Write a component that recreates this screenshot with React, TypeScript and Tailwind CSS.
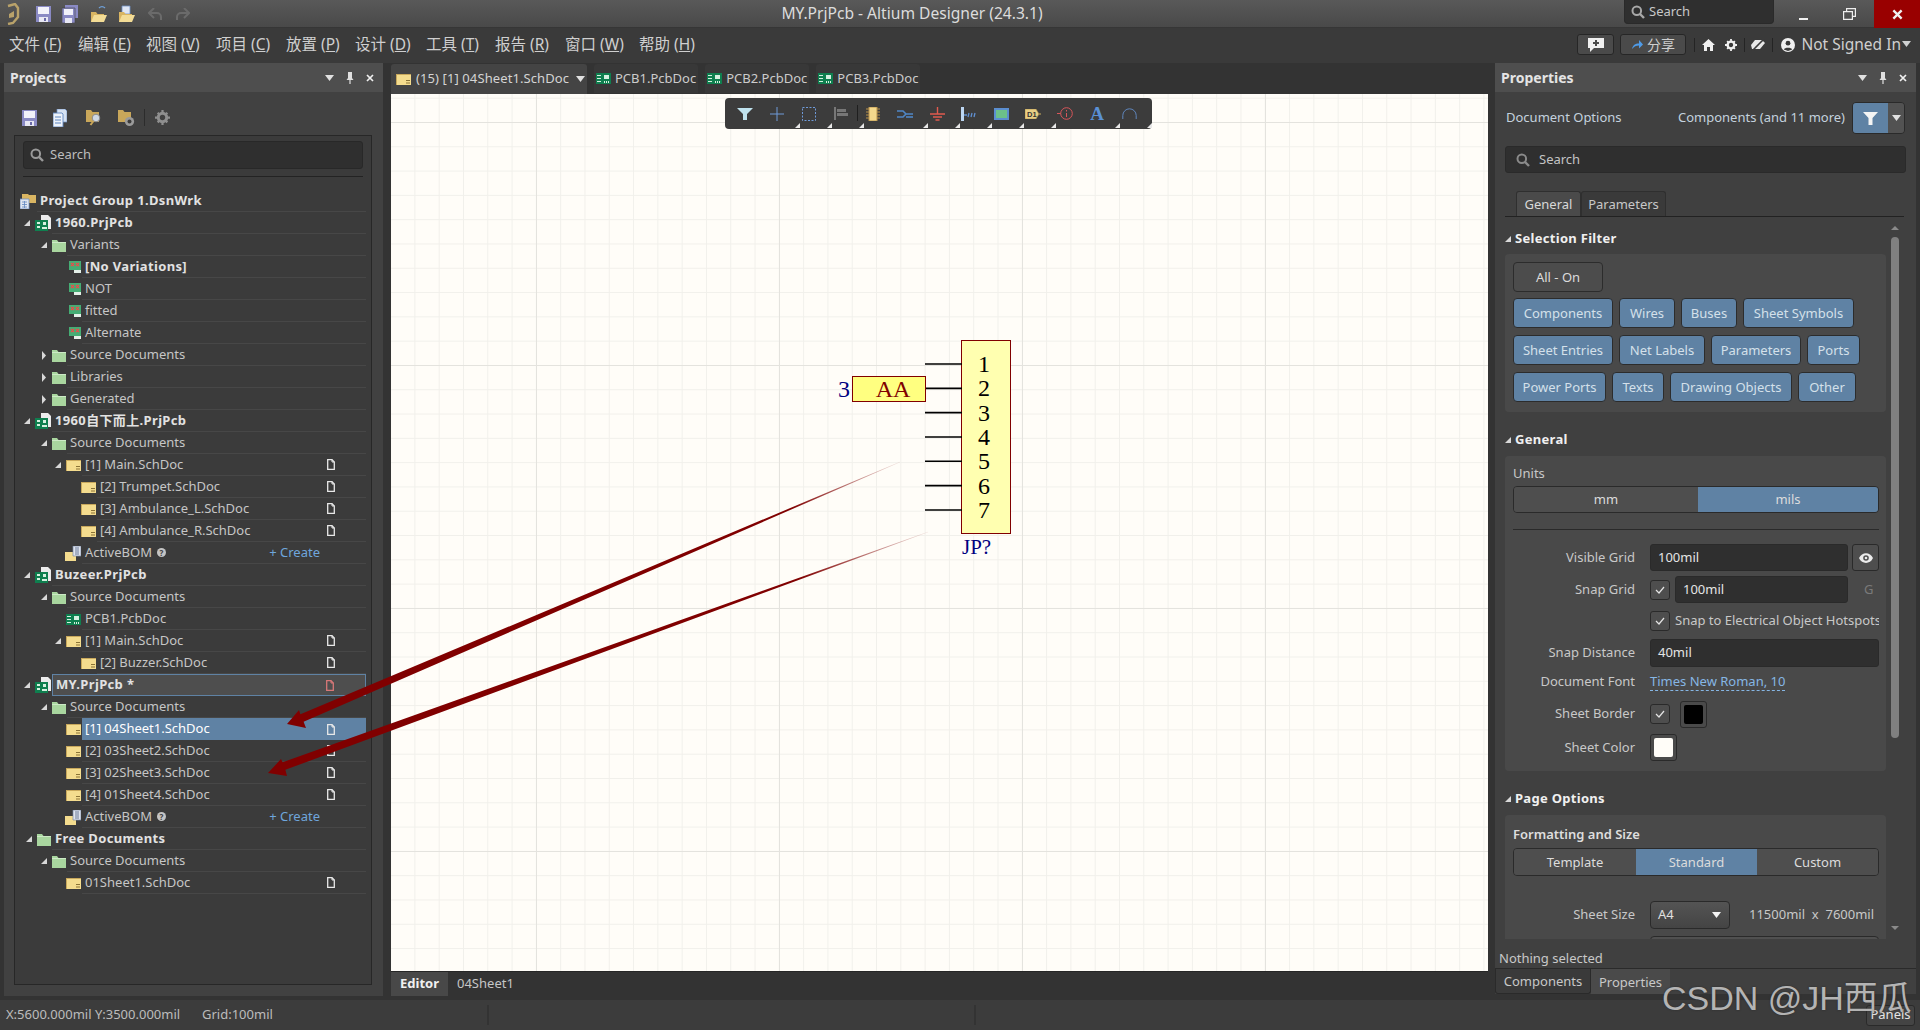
import type { ReactNode } from 'react';

const uiFont = "font-['Noto_Sans','Noto_Sans_CJK_SC',sans-serif]";

// ---- small icons ----
const Corner = () => (
  <svg width="6" height="6" viewBox="0 0 6 6"><path d="M6 0V6H0Z" fill="#d8d8d8" /></svg>
);
const Right = () => (
  <svg width="6" height="9" viewBox="0 0 6 9"><path d="M1 0L5 4.5L1 9Z" fill="#d8d8d8" /></svg>
);
const Caret = ({ c = '#e0e0e0' }: { c?: string }) => (
  <svg width="9" height="6" viewBox="0 0 9 6"><path d="M0 0H9L4.5 6Z" fill={c} /></svg>
);
const Pin = () => (
  <svg width="8" height="12" viewBox="0 0 8 12"><path d="M2 0H6V6L7.5 8H4.6V12H3.4V8H.5L2 6Z" fill="#e0e0e0" /></svg>
);
const Close = ({ s = 8 }: { s?: number }) => (
  <svg width={s} height={s} viewBox="0 0 8 8"><path d="M1 1L7 7M7 1L1 7" stroke="#f0f0f0" strokeWidth="1.7" /></svg>
);
const Glass = ({ c = '#9a9a9a' }: { c?: string }) => (
  <svg width="14" height="14" viewBox="0 0 14 14" fill="none">
    <circle cx="5.8" cy="5.8" r="4.3" stroke={c} strokeWidth="2" />
    <path d="M9 9L13 13" stroke={c} strokeWidth="2.4" />
  </svg>
);
const Floppy = () => (
  <svg width="15" height="16" viewBox="0 0 15 16">
    <path d="M0 0H15V16H0Z" fill="#8a8ac4" />
    <path d="M2 1H13V8H2Z" fill="#f2f2fa" />
    <path d="M3 11H12V16H3Z" fill="#e8e8f4" />
    <path d="M8 12H10V15H8Z" fill="#6a6aa8" />
  </svg>
);
const SaveAll = () => (
  <svg width="16" height="18" viewBox="0 0 16 18">
    <path d="M3 0H16V13H3Z" fill="#8a8ac4" />
    <path d="M0 3H13V18H0Z" fill="#8a8ac4" stroke="#3f3f3f" strokeWidth=".6" />
    <path d="M2 4H11V10H2Z" fill="#f2f2fa" />
    <path d="M3 13H10V18H3Z" fill="#e8e8f4" />
  </svg>
);
const OpenFolder = ({ page = false }: { page?: boolean }) => (
  <svg width="17" height="18" viewBox="0 0 17 18">
    {page && <path d="M4 1H12V9H4Z" fill="#dfe6f4" stroke="#6f8fc4" strokeWidth=".8" />}
    {!page && <path d="M9 3A4 4 0 0 1 15 3" fill="none" stroke="#6fa0d8" strokeWidth="1.2" />}
    <path d="M1 7H6L7.5 9H14V17H1Z" fill="#d9b562" />
    <path d="M1 17L4 10H17L14 17Z" fill="#f3dc96" />
  </svg>
);
const Curve = ({ flip = false }: { flip?: boolean }) => (
  <svg width="15" height="12" viewBox="0 0 15 12" fill="none" className={flip ? '-scale-x-100' : ''}>
    <path d="M2 5H9A4 4 0 0 1 13 9V12" stroke="#6b6b6b" strokeWidth="2" />
    <path d="M6 0L1 5L6 10" stroke="#6b6b6b" strokeWidth="2" />
  </svg>
);
const Logo = () => (
  <svg width="14" height="22" viewBox="0 0 14 22" fill="none">
    <path d="M2 3L9 1L12 5V14L7 20L2 21" stroke="#b9a26a" strokeWidth="2.4" />
    <path d="M3 11L8 8V14L3 15Z" fill="#b9a26a" />
  </svg>
);
const Docs = () => (
  <svg width="14" height="18" viewBox="0 0 14 18">
    <path d="M4 0H12L14 2V13H4Z" fill="#d6e2f2" stroke="#6f8fc4" strokeWidth=".7" />
    <path d="M0 4H9L10 5V18H0Z" fill="#eef3fa" stroke="#5f86c0" strokeWidth=".9" />
    <path d="M2 8H8M2 11H8M2 14H8" stroke="#5f86c0" />
  </svg>
);
const FolderSearch = ({ gear = false }: { gear?: boolean }) => (
  <svg width="17" height="18" viewBox="0 0 17 18">
    <path d="M0 1H5L6.5 3H13V13H0Z" fill="#c9a75a" />
    {gear ? (
      <g>
        <circle cx="11.5" cy="12.5" r="4.6" fill="#9a9a9a" />
        <circle cx="11.5" cy="12.5" r="2" fill="#3c3c3c" />
      </g>
    ) : (
      <g>
        <circle cx="10" cy="9" r="3.8" fill="#cfd8e4" stroke="#8a8a8a" />
        <path d="M7.5 12L4.5 16" stroke="#c9a75a" strokeWidth="2" />
      </g>
    )}
  </svg>
);
const Gear = ({ c = '#8f8f8f', s = 15 }: { c?: string; s?: number }) => (
  <svg width={s} height={s} viewBox="0 0 16 16">
    <path d="M8 3.5A4.5 4.5 0 1 0 8 12.5A4.5 4.5 0 1 0 8 3.5Z" fill="none" stroke={c} strokeWidth="3.2" />
    <path d="M6.8 0H9.2V3H6.8ZM6.8 13H9.2V16H6.8ZM0 6.8H3V9.2H0ZM13 6.8H16V9.2H13ZM2 3.7L3.7 2L5.6 3.9L3.9 5.6ZM10.4 12.1L12.1 10.4L14 12.3L12.3 14ZM12.3 2L14 3.7L12.1 5.6L10.4 3.9ZM3.9 10.4L5.6 12.1L3.7 14L2 12.3Z" fill={c} />
  </svg>
);
const PrjIcon = () => (
  <svg width="16" height="16" viewBox="0 0 16 16">
    <path d="M6 0H13L16 3V14H6Z" fill="#ececec" />
    <path d="M0 5H13V16H0Z" fill="#0f7f4f" />
    <path d="M2 7H5V9H2ZM2 11H5V13H2ZM8 7H11V10H8ZM7 12H12V14H7Z" fill="#d6f0e0" />
  </svg>
);
const GreenFolder = () => (
  <svg width="14" height="13" viewBox="0 0 14 13">
    <path d="M0 1H5L6.5 3H14V13H0Z" fill="#a9d69f" />
    <path d="M0 3H14V4H0Z" fill="#cdeac6" />
  </svg>
);
const SchIcon = () => (
  <svg width="15" height="11" viewBox="0 0 15 11">
    <path d="M0 0H15V11H0Z" fill="#f4dc8e" />
    <path d="M0 0H15V1H0ZM0 0H1V11H0Z" fill="#c8a85c" />
    <path d="M10 6H14V7H10ZM10 8.5H14V9.5H10Z" fill="#8a7336" />
  </svg>
);
const PcbIcon = () => (
  <svg width="15" height="11" viewBox="0 0 15 11">
    <path d="M0 0H15V11H0Z" fill="#0f7f4f" />
    <path d="M1 2H5V3H1ZM1 5H5V6H1ZM1 8H5V9H1ZM8 2H13V6H8ZM8 8H9V10H8ZM10 8H11V10H10ZM12 8H13V10H12Z" fill="#d6f0e0" />
  </svg>
);
const VarIcon = () => (
  <svg width="12" height="12" viewBox="0 0 12 12">
    <path d="M0 0H12V9H0Z" fill="#45ad74" />
    <path d="M5 9H12V12H5Z" fill="#e4f0e8" />
    <path d="M2 2L5 5M5 2L2 5M7 2L10 5M10 2L7 5" stroke="#ef4a4a" strokeWidth="1.2" />
  </svg>
);
const BomIcon = () => (
  <svg width="16" height="15" viewBox="0 0 16 15">
    <path d="M0 6H11V15H0Z" fill="#f4dc8e" />
    <path d="M8 0H16V10H8Z" fill="#dfe4ee" stroke="#7a8aa8" strokeWidth=".7" />
    <path d="M10 2H14M10 4H14M10 6H14M10 8H14" stroke="#6a7a98" />
  </svg>
);
const GroupIcon = () => (
  <svg width="16" height="16" viewBox="0 0 16 16">
    <path d="M2 1H8L9 2H16V10H2Z" fill="#d9b562" />
    <path d="M0 6H9V16H0Z" fill="#dfe6f0" stroke="#6f8fc4" strokeWidth=".8" />
    <path d="M2 9H7M2 11.5H7M2 14H7M4.5 8V15" stroke="#5f86c0" strokeWidth=".8" />
  </svg>
);
const DocMark = ({ c = '#e8e8e8' }: { c?: string }) => (
  <svg width="8" height="11" viewBox="0 0 8 11" fill="none">
    <path d="M.7.7H5L7.3 3V10.3H.7Z" stroke={c} strokeWidth="1.3" />
    <path d="M5 .7V3H7.3" stroke={c} />
  </svg>
);
const Help = () => (
  <span className="flex h-[9px] w-[9px] items-center justify-center rounded-full bg-[#c4c4c4] text-[8px] font-bold leading-none text-[#3c3c3c]">?</span>
);

// ---- project tree ----
type Kind = 'group' | 'prj' | 'folder' | 'sch' | 'pcb' | 'var' | 'bom';
type Row = {
  level: number;
  name: string;
  kind: Kind;
  bold?: boolean;
  open?: boolean;
  closed?: boolean;
  doc?: boolean;
  create?: boolean;
  hover?: boolean;
  selected?: boolean;
};

const rows: Row[] = [
  { level: 0, name: 'Project Group 1.DsnWrk', kind: 'group', bold: true },
  { level: 1, name: '1960.PrjPcb', kind: 'prj', bold: true, open: true },
  { level: 2, name: 'Variants', kind: 'folder', open: true },
  { level: 3, name: '[No Variations]', kind: 'var', bold: true },
  { level: 3, name: 'NOT', kind: 'var' },
  { level: 3, name: 'fitted', kind: 'var' },
  { level: 3, name: 'Alternate', kind: 'var' },
  { level: 2, name: 'Source Documents', kind: 'folder', closed: true },
  { level: 2, name: 'Libraries', kind: 'folder', closed: true },
  { level: 2, name: 'Generated', kind: 'folder', closed: true },
  { level: 1, name: '1960自下而上.PrjPcb', kind: 'prj', bold: true, open: true },
  { level: 2, name: 'Source Documents', kind: 'folder', open: true },
  { level: 3, name: '[1] Main.SchDoc', kind: 'sch', open: true, doc: true },
  { level: 4, name: '[2] Trumpet.SchDoc', kind: 'sch', doc: true },
  { level: 4, name: '[3] Ambulance_L.SchDoc', kind: 'sch', doc: true },
  { level: 4, name: '[4] Ambulance_R.SchDoc', kind: 'sch', doc: true },
  { level: 3, name: 'ActiveBOM', kind: 'bom', create: true },
  { level: 1, name: 'Buzeer.PrjPcb', kind: 'prj', bold: true, open: true },
  { level: 2, name: 'Source Documents', kind: 'folder', open: true },
  { level: 3, name: 'PCB1.PcbDoc', kind: 'pcb' },
  { level: 3, name: '[1] Main.SchDoc', kind: 'sch', open: true, doc: true },
  { level: 4, name: '[2] Buzzer.SchDoc', kind: 'sch', doc: true },
  { level: 1, name: 'MY.PrjPcb *', kind: 'prj', bold: true, open: true, hover: true, doc: true },
  { level: 2, name: 'Source Documents', kind: 'folder', open: true },
  { level: 3, name: '[1] 04Sheet1.SchDoc', kind: 'sch', doc: true, selected: true },
  { level: 3, name: '[2] 03Sheet2.SchDoc', kind: 'sch', doc: true },
  { level: 3, name: '[3] 02Sheet3.SchDoc', kind: 'sch', doc: true },
  { level: 3, name: '[4] 01Sheet4.SchDoc', kind: 'sch', doc: true },
  { level: 3, name: 'ActiveBOM', kind: 'bom', create: true },
  { level: 1, name: 'Free Documents', kind: 'folder', bold: true, open: true },
  { level: 2, name: 'Source Documents', kind: 'folder', open: true },
  { level: 3, name: '01Sheet1.SchDoc', kind: 'sch', doc: true },
];

const indent = ['w-[22px]', 'w-[37px]', 'w-[52px]', 'w-[67px]', 'w-[82px]'];

const kindIcon: Record<Kind, ReactNode> = {
  group: <GroupIcon />,
  prj: <PrjIcon />,
  folder: <GreenFolder />,
  sch: <SchIcon />,
  pcb: <PcbIcon />,
  var: <VarIcon />,
  bom: <BomIcon />,
};

function TreeRow({ row }: { row: Row }) {
  let body = 'border-b border-[#474747]';
  if (row.hover) body = 'border border-[#5f82a4] bg-[#4e4e4e] text-white';
  if (row.selected) body = 'bg-[#5f82a4] text-white';
  return (
    <div className="flex h-[22px]">
      <div className={`flex shrink-0 items-center justify-end pr-[1px] ${indent[row.level]}`}>
        {row.open && <span className="mr-[5px] flex items-center"><Corner /></span>}
        {row.closed && <span className="mr-[5px] flex items-center"><Right /></span>}
        <span className="flex items-center">{kindIcon[row.kind]}</span>
      </div>
      <div className={`mr-[5px] flex min-w-0 flex-1 items-center pl-[3px] ${body}`}>
        <span className={row.bold ? 'font-bold tracking-[0.35px] text-[#e2e2e2]' : ''}>{row.name}</span>
        {row.create && <span className="ml-[5px]"><Help /></span>}
        {row.create && <span className="ml-auto mr-[46px] text-[#6fa6dc]">+ Create</span>}
        {row.doc && (
          <span className="ml-auto mr-[31px] flex items-center">
            <DocMark c={row.hover ? '#d87878' : '#e8e8e8'} />
          </span>
        )}
      </div>
    </div>
  );
}

function PanelHeader({ title }: { title: string }) {
  return (
    <div className="flex h-[29px] shrink-0 items-center bg-[#4e4e4e] pl-[6px] pr-[9px]">
      <span className="text-[14px] font-bold text-[#e4e4e4]">{title}</span>
      <div className="ml-auto flex items-center gap-[12px]">
        <Caret />
        <Pin />
        <Close />
      </div>
    </div>
  );
}

function ProjectsPanel() {
  return (
    <div className="flex w-[379px] shrink-0 flex-col bg-[#414141]">
      <PanelHeader title="Projects" />
      <div className="flex h-[43px] shrink-0 items-center pl-[18px] pt-[8px]">
        <span className="w-[31px]"><Floppy /></span>
        <span className="w-[33px]"><Docs /></span>
        <span className="w-[32px]"><FolderSearch /></span>
        <span className="w-[26px]"><FolderSearch gear /></span>
        <span className="h-[17px] w-px bg-[#2c2c2c]" />
        <span className="ml-[10px]"><Gear /></span>
      </div>
      <div className="mb-[11px] ml-[10px] mr-[11px] flex-1 border border-[#272727] bg-[#3b3b3b] text-[13px] text-[#c6c6c6]">
        <div className="mx-[8px] mt-[5px] flex h-[28px] items-center gap-[6px] rounded-[3px] border border-[#282828] bg-[#2f2f2f] pl-[6px] text-[#bdbdbd]">
          <Glass />
          <span>Search</span>
        </div>
        <div className="mx-[8px] mb-[13px] mt-[7px] border-b border-[#232323]" />
        {rows.map((r, i) => (
          <TreeRow key={i} row={r} />
        ))}
      </div>
    </div>
  );
}

// ---- top bars ----
function TitleBar() {
  return (
    <div className="relative flex h-[28px] shrink-0 items-center border-b border-[#363636] bg-[linear-gradient(to_bottom,#595959,#494949)]">
      <span className="ml-[6px] w-[30px]"><Logo /></span>
      <span className="w-[26px]"><Floppy /></span>
      <span className="w-[28px]"><SaveAll /></span>
      <span className="w-[28px]"><OpenFolder /></span>
      <span className="w-[30px]"><OpenFolder page /></span>
      <span className="w-[27px]"><Curve /></span>
      <span><Curve flip /></span>
      <span className="absolute left-0 right-[96px] text-center text-[15.6px] text-[#dcdcdc]">MY.PrjPcb - Altium Designer (24.3.1)</span>
      <div className="relative ml-auto flex h-full items-start">
        <div className="flex h-[24px] w-[150px] items-center gap-[4px] rounded-b-[4px] border border-t-0 border-[#2a2a2a] bg-[#2f2f2f] pl-[6px] text-[13px] text-[#c8c8c8]">
          <Glass c="#a8a8a8" />
          <span>Search</span>
        </div>
        <div className="flex h-[27px] w-[50px] items-end justify-center pb-[7px]"><span className="ml-[8px] h-[2px] w-[9px] bg-[#f0f0f0]" /></div>
        <div className="flex h-[27px] w-[50px] items-center justify-center">
          <svg width="13" height="12" viewBox="0 0 13 12" fill="none" stroke="#eeeeee" strokeWidth="1.2">
            <path d="M.6 3.6H9.4V11.4H.6Z" />
            <path d="M3.6 3.6V.6H12.4V8.4H9.4" />
          </svg>
        </div>
        <div className="flex h-[28px] w-[46px] items-center justify-center bg-[#990000]"><Close s={11} /></div>
      </div>
    </div>
  );
}

const menus: [string, string, string][] = [
  ['文件', 'F', 'w-[69px]'], ['编辑', 'E', 'w-[68px]'], ['视图', 'V', 'w-[70px]'], ['项目', 'C', 'w-[70px]'], ['放置', 'P', 'w-[69px]'],
  ['设计', 'D', 'w-[71px]'], ['工具', 'T', 'w-[69px]'], ['报告', 'R', 'w-[70px]'], ['窗口', 'W', 'w-[74px]'], ['帮助', 'H', 'w-[70px]'],
];

function MenuBar() {
  return (
    <div className="flex h-[35px] shrink-0 items-center bg-[#3a3a3a] pb-[2px] pl-[9px] pr-[9px] text-[15.5px] text-[#cfcfcf]">
      {menus.map(([label, key, w]) => (
        <span key={key} className={`whitespace-nowrap ${w}`}>
          {label} (<span className="underline">{key}</span>)
        </span>
      ))}
      <div className="ml-auto flex items-center">
        <div className="flex h-[21px] w-[37px] items-center justify-center rounded-[3px] border border-[#262626] bg-[#4a4a4a]">
          <svg width="16" height="14" viewBox="0 0 16 14">
            <path d="M0 0H16V10H6L2 14V10H0Z" fill="#f0f0f0" />
            <path d="M7 2H9V4H11V6H9V8H7V6H5V4H7Z" fill="#4a4a4a" />
          </svg>
        </div>
        <div className="ml-[6px] flex h-[21px] w-[66px] items-center justify-center gap-[4px] rounded-[3px] border border-[#262626] bg-[#4a4a4a] text-[14px]">
          <svg width="11" height="9" viewBox="0 0 11 9"><path d="M0 9C1 5 3 3.5 7 3.5V0L11 4.5L7 8.5V5.5C4 5.5 2 6.5 0 9Z" fill="#4f9be8" /></svg>
          <span>分享</span>
        </div>
        <span className="ml-[8px] h-[14px] w-px bg-[#242424]" />
        <svg className="ml-[7px]" width="13" height="12" viewBox="0 0 13 12"><path d="M6.5 0L13 6H11V12H8V8H5V12H2V6H0Z" fill="#f0f0f0" /></svg>
        <span className="ml-[10px]"><Gear c="#f0f0f0" s={12} /></span>
        <span className="ml-[7px] h-[14px] w-px bg-[#242424]" />
        <svg className="ml-[6px]" width="14" height="12" viewBox="0 0 14 12">
          <path d="M4 1H11L14 4L9 10H1L0 6Z" fill="#e8e8e8" />
          <path d="M1 12L13 0" stroke="#3a3a3a" strokeWidth="1.6" />
        </svg>
        <span className="ml-[7px] h-[14px] w-px bg-[#242424]" />
        <svg className="ml-[8px]" width="14" height="14" viewBox="0 0 14 14">
          <circle cx="7" cy="7" r="7" fill="#f0f0f0" />
          <circle cx="7" cy="5.2" r="2.4" fill="#3a3a3a" />
          <path d="M2.8 11.5C3.5 9 10.5 9 11.2 11.5L7 13Z" fill="#3a3a3a" />
        </svg>
        <span className="ml-[6px] whitespace-nowrap">Not Signed In</span>
        <span className="ml-[1px] mb-[2px] flex"><Caret c="#d0d0d0" /></span>
      </div>
    </div>
  );
}

// ---- editor ----
const DocTab = ({ name, icon }: { name: string; icon: ReactNode }) => (
  <div className="flex h-[29px] items-center gap-[4px] rounded-t-[3px] bg-[#383838] px-[2px] text-[13px] text-[#cccccc]">
    <span className="flex items-center">{icon}</span>
    <span>{name}</span>
  </div>
);

const Fold = () => (
  <span className="absolute bottom-[1px] right-[-7px] h-0 w-0 border-b-[5px] border-l-[5px] border-b-[#e8e8e8] border-l-transparent" />
);

const tools: ReactNode[] = [
  <svg width="16" height="12" viewBox="0 0 16 12"><path d="M0 0H16L10 6V12H6V6Z" fill="#bfe2ee" /></svg>,
  <svg width="14" height="14" viewBox="0 0 14 14"><path d="M7 0V14M0 7H14" stroke="#6f9ad8" /></svg>,
  <svg width="14" height="14" viewBox="0 0 14 14"><path d="M.5.5H13.5V13.5H.5Z" fill="none" stroke="#6f9ad8" strokeDasharray="2 1.5" /></svg>,
  <svg width="14" height="13" viewBox="0 0 14 13"><path d="M0 0H2V13H0ZM3 2H12V5H3ZM3 6H14V9H3Z" fill="#777777" /></svg>,
  <svg width="14" height="14" viewBox="0 0 14 14"><path d="M3 0H11V14H3Z" fill="#f4d98c" stroke="#b9924a" /><path d="M0 2H3M0 5H3M0 8H3M0 11H3M11 2H14M11 5H14M11 8H14M11 11H14" stroke="#b9924a" /></svg>,
  <svg width="16" height="10" viewBox="0 0 16 10" fill="none" stroke="#4f86c6" strokeWidth="1.6"><path d="M0 2H6L9 5H16" /><path d="M0 8H6L9 5" /><path d="M9 8H16" /></svg>,
  <svg width="15" height="14" viewBox="0 0 15 14"><path d="M7.5 0V7M0 7H15M3 10H12M5.5 13H9.5" stroke="#e05a4e" strokeWidth="1.4" /></svg>,
  <svg width="16" height="14" viewBox="0 0 16 14"><path d="M0 0H3V14H0Z" fill="#bcd6f2" /><path d="M3 8H6M7 10L8 6M10 10L11 6M13 10L14 6" stroke="#5f8fd0" strokeWidth="1.3" /></svg>,
  <svg width="15" height="12" viewBox="0 0 15 12"><path d="M0 0H15V12H0Z" fill="#5b8ed0" /><path d="M2 2H13V10H2Z" fill="#6cc08a" /></svg>,
  <svg width="16" height="10" viewBox="0 0 16 10"><path d="M0 0H11L14 5L11 10H0Z" fill="#e8cf84" stroke="#a88c44" strokeWidth=".6" /><path d="M14 5H16" stroke="#c8ac5c" /><text x="2" y="8" fontSize="7.5" fontWeight="bold" fill="#333333" fontFamily="Liberation Sans, sans-serif">D1</text></svg>,
  <svg width="16" height="13" viewBox="0 0 16 13" fill="none" stroke="#d8565a"><circle cx="9.5" cy="6.5" r="5.8" /><path d="M0 6.5H3.7M9.5 3V4.5M9.5 6V10" /></svg>,
  <span className="font-['Liberation_Serif',serif] text-[19px] font-bold leading-none text-[#5a90d4]">A</span>,
  <svg width="15" height="11" viewBox="0 0 15 11" fill="none"><path d="M.8 11V7.5A6.7 6.7 0 0 1 14.2 7.5V11" stroke="#5f86bc" /></svg>,
];

function Schematic() {
  const serif = 'Liberation Serif, serif';
  const pins = [1, 2, 3, 4, 5, 6, 7];
  return (
    <svg className="absolute left-0 top-0" width="1097" height="877" viewBox="391 94 1097 877">
      <rect x="961.5" y="340.5" width="49" height="193" fill="#ffffb0" stroke="#800000" />
      {pins.map((n, i) => {
        const y = 364 + i * 24.33;
        return (
          <g key={n}>
            <path d={`M925 ${y}H962`} stroke="#000000" strokeWidth="1.6" />
            <text x="984" y={y + 8} fontSize="24" fontFamily={serif} textAnchor="middle" fill="#000000">{n}</text>
          </g>
        );
      })}
      <rect x="852.5" y="376.5" width="73" height="25" fill="#ffff80" stroke="#800000" />
      <text x="893" y="397" fontSize="24" fontFamily={serif} textAnchor="middle" fill="#800000">AA</text>
      <text x="838" y="397" fontSize="24" fontFamily={serif} fill="#000080">3</text>
      <text x="962" y="554" fontSize="21" fontFamily={serif} fill="#000080">JP?</text>
    </svg>
  );
}

function Editor() {
  return (
    <div className="flex w-[1097px] shrink-0 flex-col">
      <div className="flex h-[31px] shrink-0 gap-[7px] pt-[1px]">
        <div className="flex h-[30px] w-[196px] items-center gap-[5px] rounded-t-[3px] bg-[#444444] pl-[5px] text-[13px] text-[#d4d4d4]">
          <SchIcon />
          <span className="whitespace-nowrap tracking-[0.1px]">(15) [1] 04Sheet1.SchDoc</span>
          <span className="ml-auto mr-[2px] flex"><Caret /></span>
        </div>
        <DocTab name="PCB1.PcbDoc" icon={<PcbIcon />} />
        <DocTab name="PCB2.PcbDoc" icon={<PcbIcon />} />
        <DocTab name="PCB3.PcbDoc" icon={<PcbIcon />} />
      </div>
      <div className="relative flex-1 bg-[#fffdf8] bg-[linear-gradient(to_right,#e4e3de_1px,transparent_1px),linear-gradient(to_bottom,#e4e3de_1px,transparent_1px),linear-gradient(to_right,#f1f0eb_1px,transparent_1px),linear-gradient(to_bottom,#f1f0eb_1px,transparent_1px)] [background-size:243px_243px,243px_243px,24.3px_24.3px,24.3px_24.3px] [background-position:145px_28px,145px_28px,23.4px_3.7px,23.4px_3.7px]">
        <Schematic />
        <div className="absolute left-[334px] top-[4px] flex h-[31px] w-[427px] items-center rounded-[4px] bg-[#3c3c3c] pl-[4px]">
          {tools.map((t, i) => (
            <div key={i} className="relative flex h-full w-[32px] shrink-0 items-center justify-center">
              {t}
              {i !== 0 && i !== 4 && i !== 10 && <Fold />}
              {i === 3 && <span className="absolute right-[-1px] top-[7px] h-[16px] w-px bg-[#1f1f1f]" />}
            </div>
          ))}
        </div>
      </div>
      <div className="flex h-[25px] shrink-0 items-stretch border-t border-[#262626] text-[13px]">
        <div className="flex w-[57px] items-center justify-center bg-[#484848] font-bold text-[#f0f0f0]">Editor</div>
        <div className="flex items-center pl-[9px] text-[#c6c6c6]">04Sheet1</div>
      </div>
    </div>
  );
}

// ---- properties ----
const filterRows: [string, string][][] = [
  [['Components', 'w-[100px]'], ['Wires', 'w-[56px]'], ['Buses', 'w-[56px]'], ['Sheet Symbols', 'w-[111px]']],
  [['Sheet Entries', 'w-[100px]'], ['Net Labels', 'w-[86px]'], ['Parameters', 'w-[90px]'], ['Ports', 'w-[53px]']],
  [['Power Ports', 'w-[93px]'], ['Texts', 'w-[52px]'], ['Drawing Objects', 'w-[122px]'], ['Other', 'w-[58px]']],
];

const SectionHead = ({ title, pad }: { title: string; pad: string }) => (
  <div className={`flex items-center gap-[4px] text-[13px] font-bold tracking-[0.3px] text-[#f0f0f0] ${pad}`}>
    <Corner />
    <span>{title}</span>
  </div>
);

const Field = ({ label, children, h, mt }: { label: string; children: ReactNode; h: string; mt: string }) => (
  <div className={`flex items-center ${h} ${mt}`}>
    <span className="w-[122px] whitespace-nowrap text-right">{label}</span>
    <div className="ml-[15px] flex h-full min-w-0 flex-1 items-center">{children}</div>
  </div>
);

const Input = ({ value, cls }: { value: string; cls: string }) => (
  <div className={`flex h-full items-center rounded-[3px] border border-[#2a2a2a] bg-[#2f2f2f] pl-[7px] text-[#e4e4e4] ${cls}`}>{value}</div>
);

const Check = () => (
  <div className="flex h-[20px] w-[20px] shrink-0 items-center justify-center rounded-[3px] border border-[#2a2a2a] bg-[#4e4e4e]">
    <svg width="10" height="8" viewBox="0 0 10 8" fill="none"><path d="M1 4L4 7L9 1" stroke="#e4e4e4" strokeWidth="1.2" /></svg>
  </div>
);

const Swatch = ({ color, cls }: { color: string; cls: string }) => (
  <div className={`flex h-[27px] w-[27px] shrink-0 items-center justify-center rounded-[3px] border border-[#2a2a2a] bg-[#4a4a4a] ${cls}`}>
    <span className={`h-[19px] w-[19px] rounded-[2px] ${color}`} />
  </div>
);

function PropertiesPanel() {
  return (
    <div className="flex w-[421px] shrink-0 flex-col">
      <PanelHeader title="Properties" />
      <div className="flex h-[847px] shrink-0 flex-col overflow-hidden bg-[#404040] text-[13px] text-[#c8c8c8]">
        <div className="ml-[11px] mr-[11px] mt-[10px] flex h-[32px] shrink-0 items-center text-[#c4d2de]">
          <span>Document Options</span>
          <span className="ml-auto">Components (and 11 more)</span>
          <div className="ml-[7px] flex h-full w-[53px] overflow-hidden rounded-[4px] border border-[#2a2a2a]">
            <div className="flex w-[35px] items-center justify-center bg-[#5f82a4]">
              <svg width="15" height="13" viewBox="0 0 15 13"><path d="M0 0H15L9.5 6V13H5.5V6Z" fill="#f4f4f4" /></svg>
            </div>
            <div className="flex flex-1 items-center justify-center bg-[#525252]"><Caret /></div>
          </div>
        </div>
        <div className="ml-[10px] mr-[10px] mt-[12px] flex h-[27px] shrink-0 items-center gap-[9px] rounded-[3px] border border-[#2a2a2a] bg-[#2f2f2f] pl-[10px] text-[#c4c4c4]">
          <Glass c="#8a8a8a" />
          <span className="pt-[1px]">Search</span>
        </div>
        <div className="ml-[10px] mr-[12px] mt-[18px] flex h-[26px] shrink-0 border-b border-[#222222] pl-[11px]">
          <div className="flex w-[65px] items-center justify-center rounded-t-[3px] border border-b-0 border-[#2f2f2f] bg-[#4a4a4a] pt-[2px] text-[#d8d8d8]">General</div>
          <div className="flex w-[85px] items-center justify-center rounded-t-[3px] border border-b-0 border-[#2f2f2f] bg-[#3a3a3a] pt-[2px]">Parameters</div>
        </div>
        <div className="flex min-h-0 flex-1">
          <div className="ml-[10px] w-[381px] shrink-0">
            <SectionHead title="Selection Filter" pad="h-[37px] pt-[6px]" />
            <div className="h-[158px] rounded-[4px] bg-[#494949] pl-[8px] pt-[8px] text-[#d4e0ea]">
              <div className="flex h-[30px] w-[90px] items-center justify-center rounded-[4px] border border-[#2c2c2c] bg-[#4c4c4c] pt-[2px] text-[#dcdcdc]">All - On</div>
              {filterRows.map((fr, i) => (
                <div key={i} className={`flex h-[30px] gap-[6px] ${i === 0 ? 'mt-[6px]' : 'mt-[7px]'}`}>
                  {fr.map(([name, w]) => (
                    <div key={name} className={`flex items-center justify-center rounded-[4px] border border-[#2c2c2c] bg-[#5f82a4] pt-[2px] ${w}`}>{name}</div>
                  ))}
                </div>
              ))}
            </div>
            <SectionHead title="General" pad="h-[44px] pt-[11px]" />
            <div className="h-[315px] rounded-[4px] bg-[#494949] pl-[8px] pr-[7px]">
              <div className="flex h-[26px] items-center pt-[9px]">Units</div>
              <div className="mt-[4px] flex h-[27px] overflow-hidden rounded-[4px] border border-[#2a2a2a] pt-0 text-[#dcdcdc]">
                <div className="flex w-[184px] items-center justify-center bg-[#4e4e4e] pt-[1px]">mm</div>
                <div className="flex flex-1 items-center justify-center bg-[#5f82a4] pt-[1px]">mils</div>
              </div>
              <div className="mt-[16px] border-b border-[#2a2a2a]" />
              <Field label="Visible Grid" h="h-[27px]" mt="mt-[14px]">
                <Input value="100mil" cls="w-[198px]" />
                <div className="ml-[4px] flex h-full w-[27px] items-center justify-center rounded-[3px] border border-[#2a2a2a] bg-[#4e4e4e]">
                  <svg width="14" height="10" viewBox="0 0 14 10"><path d="M0 5C3 -1.5 11 -1.5 14 5C11 11.5 3 11.5 0 5Z" fill="#ececec" /><circle cx="7" cy="5" r="2.8" fill="#4e4e4e" /><circle cx="7" cy="5" r="1.3" fill="#ececec" /></svg>
                </div>
              </Field>
              <Field label="Snap Grid" h="h-[27px]" mt="mt-[5px]">
                <Check />
                <Input value="100mil" cls="ml-[5px] w-[173px]" />
                <span className="ml-[16px] text-[#7a7a7a]">G</span>
              </Field>
              <Field label="" h="h-[19px]" mt="mt-[8px]">
                <Check />
                <span className="ml-[5px] overflow-hidden whitespace-nowrap">Snap to Electrical Object Hotspots</span>
              </Field>
              <Field label="Snap Distance" h="h-[28px]" mt="mt-[9px]">
                <Input value="40mil" cls="w-full" />
              </Field>
              <Field label="Document Font" h="h-[20px]" mt="mt-[5px]">
                <span className="border-b border-dashed border-[#86b6e4] leading-[17px] text-[#86b6e4]">Times New Roman, 10</span>
              </Field>
              <Field label="Sheet Border" h="h-[26px]" mt="mt-[9px]">
                <Check />
                <Swatch color="bg-black" cls="ml-[10px]" />
              </Field>
              <Field label="Sheet Color" h="h-[27px]" mt="mt-[7px]">
                <Swatch color="bg-[#fffdf8]" cls="" />
              </Field>
            </div>
            <SectionHead title="Page Options" pad="h-[44px] pt-[11px]" />
            <div className="h-[200px] rounded-[4px] bg-[#494949] pl-[8px] pr-[7px] pt-[11px]">
              <div className="flex h-[18px] items-center font-semibold text-[#dedede]">Formatting and Size</div>
              <div className="mt-[4px] flex h-[28px] overflow-hidden rounded-[4px] border border-[#2a2a2a] text-[#dcdcdc]">
                <div className="flex w-[122px] items-center justify-center bg-[#4e4e4e] pt-[1px]">Template</div>
                <div className="flex w-[121px] items-center justify-center bg-[#5f82a4] pt-[1px]">Standard</div>
                <div className="flex flex-1 items-center justify-center bg-[#4e4e4e] pt-[1px]">Custom</div>
              </div>
              <Field label="Sheet Size" h="h-[28px]" mt="mt-[25px]">
                <div className="flex h-full w-[80px] items-center justify-between rounded-[4px] border border-[#2a2a2a] bg-[linear-gradient(to_bottom,#545454,#444444)] pl-[7px] pr-[8px] text-[#e0e0e0]">
                  <span>A4</span>
                  <Caret c="#f4f4f4" />
                </div>
                <span className="ml-[19px] whitespace-pre">11500mil  x  7600mil</span>
              </Field>
              <div className="ml-[137px] mt-[7px] h-[20px] rounded-[4px] border border-[#2a2a2a] bg-[#505050]" />
            </div>
          </div>
          <div className="ml-[5px] flex w-[8px] flex-col items-center">
            <span className="mt-[9px] h-0 w-0 border-x-[4px] border-b-[4px] border-x-transparent border-b-[#8a8a8a]" />
            <span className="mt-[7px] h-[501px] w-[8px] rounded-[4px] bg-[#808080]" />
            <span className="mb-[9px] mt-auto h-0 w-0 border-x-[4px] border-t-[4px] border-x-transparent border-t-[#8a8a8a]" />
          </div>
        </div>
      </div>
      <div className="flex h-[29px] shrink-0 items-end bg-[#404040] pl-[4px] text-[13px] text-[#c8c8c8]">Nothing selected</div>
      <div className="flex h-[26px] shrink-0 border-t border-[#2a2a2a] bg-[#404040] text-[13px] text-[#c8c8c8]">
        <div className="flex w-[96px] items-center justify-center rounded-b-[3px] border border-t-0 border-[#2a2a2a] bg-[#3a3a3a] pt-[2px]">Components</div>
        <div className="flex w-[79px] items-center justify-center bg-[#4a4a4a] pt-[2px]">Properties</div>
      </div>
    </div>
  );
}

// the two big red arrows drawn over the screenshot
function Arrows() {
  return (
    <svg className="pointer-events-none absolute inset-0" width="1920" height="1030" viewBox="0 0 1920 1030">
      <defs>
        <linearGradient id="fadeA" gradientUnits="userSpaceOnUse" x1="790" y1="509" x2="900" y2="462">
          <stop offset="0" stopColor="#800000" />
          <stop offset="1" stopColor="#800000" stopOpacity=".1" />
        </linearGradient>
        <linearGradient id="fadeB" gradientUnits="userSpaceOnUse" x1="800" y1="582" x2="928" y2="532">
          <stop offset="0" stopColor="#800000" />
          <stop offset="1" stopColor="#800000" stopOpacity=".1" />
        </linearGradient>
      </defs>
      <path d="M287 724L299 710L300.4 714.3L900 461.8V462.2L303.6 721.7L306 728Z" fill="url(#fadeA)" />
      <path d="M268 773L281 759L282.6 762.2L928 531.8V532.2L285.4 769.8L287 776Z" fill="url(#fadeB)" />
    </svg>
  );
}

export default function App() {
  return (
    <div className={`relative flex h-[1030px] w-[1920px] flex-col overflow-hidden bg-[#333333] ${uiFont}`}>
      <TitleBar />
      <MenuBar />
      <div className="flex h-[933px] shrink-0 pl-[4px]">
        <ProjectsPanel />
        <div className="w-[8px] shrink-0" />
        <Editor />
        <div className="w-[7px] shrink-0" />
        <PropertiesPanel />
      </div>
      <div className="mt-[4px] flex h-[30px] shrink-0 items-center bg-[#3c3c3c] pl-[6px] text-[13px] text-[#bcbcbc]">
        <span className="w-[196px] whitespace-nowrap">X:5600.000mil Y:3500.000mil</span>
        <span className="w-[285px] whitespace-nowrap">Grid:100mil</span>
        <span className="h-[20px] w-[2px] bg-[#333333]" />
        <span className="ml-[485px] h-[20px] w-[2px] bg-[#333333]" />
        <div className="ml-auto mr-[5px] flex h-[21px] w-[49px] items-center justify-center rounded-[3px] border border-[#2a2a2a] bg-[#444444] text-[#e4e4e4]">Panels</div>
      </div>
      <Arrows />
      <span className="absolute left-[1662px] top-[975px] whitespace-nowrap font-['Liberation_Sans','Noto_Sans_CJK_SC',sans-serif] text-[34px] leading-[46px] text-[#b4b4b4] [text-shadow:0_0_2px_#2a2a2a]">CSDN @JH西瓜</span>
    </div>
  );
}
